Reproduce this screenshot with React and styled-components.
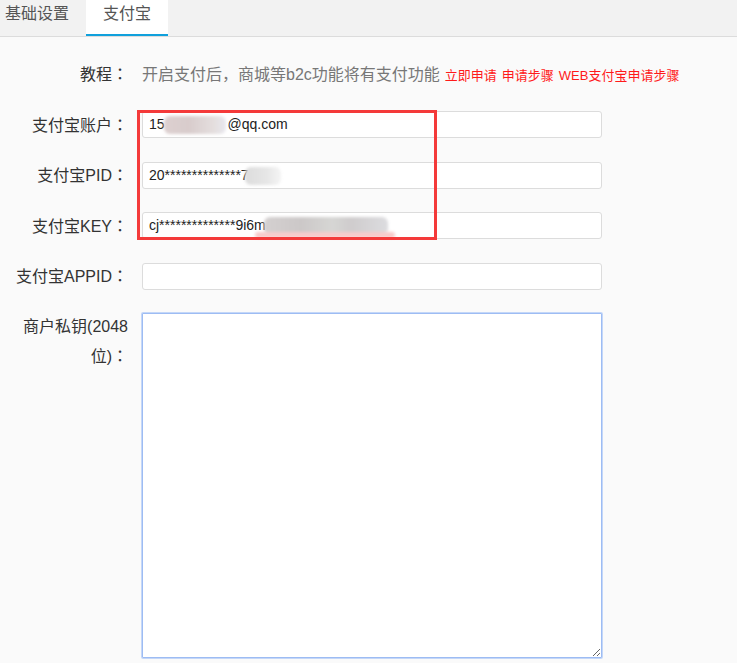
import React from "react";
import styled, { createGlobalStyle } from "styled-components";

const Global = createGlobalStyle`
  html, body { margin: 0; padding: 0; background: #fafafa; }
  body {
    font-family: "Liberation Sans", "Noto Sans CJK SC", sans-serif;
    color: #333;
  }
`;

const Page = styled.div`
  width: 737px;
  min-height: 663px;
  background: #fafafa;
  position: relative;
  overflow: hidden;
`;

const TabBar = styled.div`
  display: flex;
  height: 36px;
  background: #f2f2f2;
  border-bottom: 1px solid #dcdcdc;
`;

const Tab = styled.div`
  box-sizing: border-box;
  height: 36px;
  padding: ${(p) => (p.$first ? "0 17px 0 5px" : "0 17px")};
  font-size: 16px;
  line-height: 28px;
  color: #555;
  background: ${(p) => (p.$active ? "#fff" : "transparent")};
  border-bottom: 2px solid ${(p) => (p.$active ? "#10a0dc" : "transparent")};
`;

const Form = styled.div`
  position: relative;
  padding-top: 23.5px;
`;

const Row = styled.div`
  display: flex;
  align-items: ${(p) => (p.$top ? "flex-start" : "center")};
  margin-bottom: 23.5px;
  height: ${(p) => (p.$top ? "auto" : "27px")};
`;

const Label = styled.div`
  box-sizing: border-box;
  width: 128px;
  padding-left: 12px;
  text-align: right;
  font-size: 16px;
  line-height: ${(p) => (p.$lh ? p.$lh : 27)}px;
  color: #333;
  flex-shrink: 0;
`;

const Colon = styled.span`
  font-family: "Noto Sans CJK TC", "Noto Sans CJK SC", sans-serif;
`;

const Control = styled.div`
  margin-left: 14px;
  display: flex;
  align-items: center;
`;

const Tutorial = styled.span`
  font-size: 16px;
  color: #777;
  line-height: 27px;
`;

const Link = styled.span`
  font-size: 13px;
  color: #ff1a1a;
  margin-left: 5px;
`;

const Field = styled.div`
  box-sizing: border-box;
  width: 460px;
  height: 27px;
  background: #fff;
  border: 1px solid #dcdcdc;
  border-radius: 3px;
  padding: 0 6px;
  font-size: 14px;
  line-height: 25px;
  color: #222;
  white-space: nowrap;
  overflow: visible;
  position: relative;
`;

const Smudge = styled.span`
  display: inline-block;
  vertical-align: middle;
  width: ${(p) => p.$w}px;
  height: ${(p) => p.$h || 18}px;
  margin-left: ${(p) => p.$ml || 0}px;
  margin-right: ${(p) => p.$mr || 0}px;
  background: ${(p) => p.$bg};
  filter: blur(1.5px);
  border-radius: 6px;
`;

const Pink = styled.span`
  position: absolute;
  left: ${(p) => p.$x}px;
  top: 19px;
  width: ${(p) => p.$w}px;
  height: 6px;
  background: #f7caca;
  filter: blur(1.5px);
  border-radius: 4px;
`;

const TextArea = styled.textarea`
  box-sizing: border-box;
  width: 460px;
  height: 345px;
  margin: 0;
  background: #fff;
  border: 1px solid #9dbcf3;
  box-shadow: 0 0 0 1px #c4d7f8;
  border-radius: 1px;
  outline: none;
  resize: both;
  font-family: inherit;
`;

const Highlight = styled.div`
  position: absolute;
  left: 137px;
  top: 73px;
  width: 300px;
  height: 130px;
  box-sizing: border-box;
  border: 3px solid #f43a3a;
  pointer-events: none;
`;

const rows = [
  { label: "支付宝账户", kind: "account" },
  { label: "支付宝PID", kind: "pid" },
  { label: "支付宝KEY", kind: "key" },
  { label: "支付宝APPID", kind: "empty" },
];

function FieldValue({ kind }) {
  if (kind === "account")
    return (
      <Field>
        15
        <Smudge $w={62} $ml={-1} $mr={2} $bg="linear-gradient(90deg,#ddd0d0,#d8cccc 40%,#e4dede 80%,#e8e8ee)" />
        @qq.com
      </Field>
    );
  if (kind === "pid")
    return (
      <Field>
        20**************7
        <Smudge $w={36} $ml={-4} $bg="linear-gradient(90deg,#dcdcdc,#e6e6e6 60%,#f4f4f4)" />
      </Field>
    );
  if (kind === "key")
    return (
      <Field>
        cj**************9i6m
        <Smudge $w={124} $ml={-2} $bg="linear-gradient(90deg,#d4d0d0,#ccc8c8 30%,#d6d6d4 55%,#cfcccd 70%,#dcdcdf)" />
        <Pink $x={112} $w={140} />
      </Field>
    );
  return <Field />;
}

export default function App() {
  return (
    <Page>
      <Global />
      <TabBar>
        <Tab $first>基础设置</Tab>
        <Tab $active>支付宝</Tab>
      </TabBar>
      <Form>
        <Row>
          <Label>教程<Colon>：</Colon></Label>
          <Control>
            <Tutorial>开启支付后，商城等b2c功能将有支付功能</Tutorial>
            <Link>立即申请</Link>
            <Link>申请步骤</Link>
            <Link>WEB支付宝申请步骤</Link>
          </Control>
        </Row>
        {rows.map((r) => (
          <Row key={r.kind}>
            <Label>{r.label}<Colon>：</Colon></Label>
            <Control>
              <FieldValue kind={r.kind} />
            </Control>
          </Row>
        ))}
        <Row $top>
          <Label $lh={28}>商户私钥(2048位)<Colon>：</Colon></Label>
          <Control>
            <TextArea />
          </Control>
        </Row>
        <Highlight />
      </Form>
    </Page>
  );
}
